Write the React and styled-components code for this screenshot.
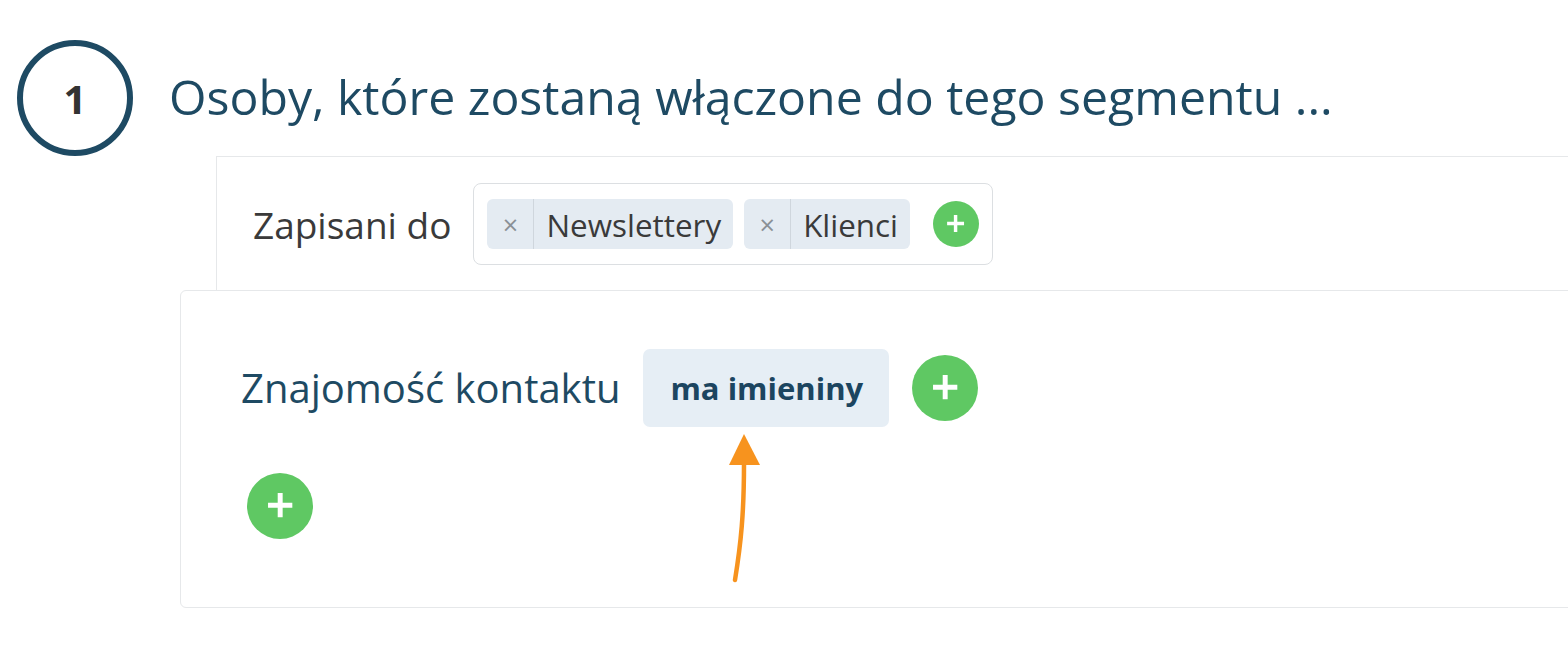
import React from 'react'
import styled, { createGlobalStyle } from 'styled-components'

const Global = createGlobalStyle`
  body {
    margin: 0;
    background: #fff;
    font-family: "Open Sans", "Noto Sans", sans-serif;
    overflow: hidden;
  }
`

const Page = styled.div`
  width: 1568px;
  height: 672px;
  padding-top: 40px;
  box-sizing: border-box;
  overflow: hidden;
`

const Header = styled.div`
  display: flex;
  align-items: center;
  padding-left: 17px;
  gap: 36px;
`

const StepCircle = styled.div`
  width: 116px;
  height: 116px;
  flex-shrink: 0;
  box-sizing: border-box;
  border: 6px solid #1e4a63;
  border-radius: 50%;
  display: flex;
  align-items: center;
  justify-content: center;
  font-size: 40px;
  font-weight: 700;
  color: #333;
`

const Title = styled.h1`
  margin: 0;
  margin-top: -4px;
  font-size: 48.2px;
  font-weight: 400;
  color: #1e4a63;
  white-space: nowrap;
`

const Panel = styled.div`
  margin-left: ${p => p.$left}px;
  margin-top: ${p => p.$mt || 0}px;
  width: 1500px;
  height: ${p => p.$h}px;
  box-sizing: border-box;
  background: #fff;
  border: 1.5px solid #e6e8ea;
  border-radius: ${p => p.$radius || 0}px;
  display: flex;
  flex-direction: column;
  padding: ${p => p.$pad};
`

const Row = styled.div`
  display: flex;
  align-items: center;
  gap: ${p => p.$gap}px;
  margin: ${p => p.$m || 0};
`

const Label = styled.span`
  font-size: ${p => p.$size}px;
  color: ${p => p.$color};
  white-space: nowrap;
`

const TagBox = styled.div`
  display: flex;
  align-items: center;
  gap: 11px;
  height: 82px;
  box-sizing: border-box;
  padding: 0 13px;
  border: 1.5px solid #dcdfe2;
  border-radius: 8px;
`

const Chip = styled.div`
  display: flex;
  align-items: stretch;
  height: 50px;
  background: #e4ebf2;
  border-radius: 6px;
  font-size: 31.4px;
  color: #3a3a3a;
`

const ChipX = styled.span`
  width: 46px;
  display: flex;
  align-items: center;
  justify-content: center;
  font-size: 27px;
  color: #8a9096;
  border-right: 1.5px solid #cfd6dd;
`

const ChipText = styled.span`
  display: flex;
  align-items: center;
  padding: 0 12px 0 12px;
  white-space: nowrap;
`

const PlusButton = styled.div`
  width: ${p => p.$d}px;
  height: ${p => p.$d}px;
  border-radius: 50%;
  background: #5fc863;
  display: flex;
  align-items: center;
  justify-content: center;
  flex-shrink: 0;
  margin-left: ${p => p.$ml || 0}px;
`

const ValueChip = styled.div`
  position: relative;
  height: 78px;
  padding: 0 26px 0 27px;
  display: flex;
  align-items: center;
  background: #e6eef5;
  border-radius: 7px;
  font-size: 31px;
  font-weight: 700;
  color: #1c4560;
  white-space: nowrap;
`

const Arrow = styled.svg`
  position: absolute;
  left: 86px;
  top: 84px;
  overflow: visible;
`

function Plus({ d }) {
  const s = d * 0.46
  const w = d * 0.075
  return (
    <svg width={s} height={s} viewBox="0 0 20 20">
      <path d="M10 2v16M2 10h16" stroke="#fff" strokeWidth={20 * w / s} />
    </svg>
  )
}

function Tag({ children }) {
  return (
    <Chip>
      <ChipX>×</ChipX>
      <ChipText>{children}</ChipText>
    </Chip>
  )
}

export default function App() {
  return (
    <>
      <Global />
      <Page>
        <Header>
          <StepCircle>1</StepCircle>
          <Title>Osoby, które zostaną włączone do tego segmentu ...</Title>
        </Header>

        <Panel $left={216} $h={135} $pad="26px 0 0 36px">
          <Row $gap={22}>
            <Label $size={37} $color="#3a3a3a">Zapisani do</Label>
            <TagBox>
              <Tag>Newslettery</Tag>
              <Tag>Klienci</Tag>
              <PlusButton $d={46} $ml={12}><Plus d={46} /></PlusButton>
            </TagBox>
          </Row>
        </Panel>

        <Panel $left={180} $h={318} $radius={6} $mt={-1.5} $pad="58px 0 0 60px">
          <Row $gap={23}>
            <Label $size={40} $color="#1e4a63">Znajomość kontaktu</Label>
            <ValueChip>
              ma imieniny
              <Arrow width="40" height="150" viewBox="0 0 40 150">
                <path d="M6 147 C 12 110, 15 80, 15 30" fill="none" stroke="#f7931e" strokeWidth="4.5" strokeLinecap="round" />
                <path d="M0 32 L15 1 L31 32 Z" fill="#f7931e" />
              </Arrow>
            </ValueChip>
            <PlusButton $d={66}><Plus d={66} /></PlusButton>
          </Row>
          <Row $gap={0} $m="46px 0 0 6px">
            <PlusButton $d={66}><Plus d={66} /></PlusButton>
          </Row>
        </Panel>
      </Page>
    </>
  )
}
